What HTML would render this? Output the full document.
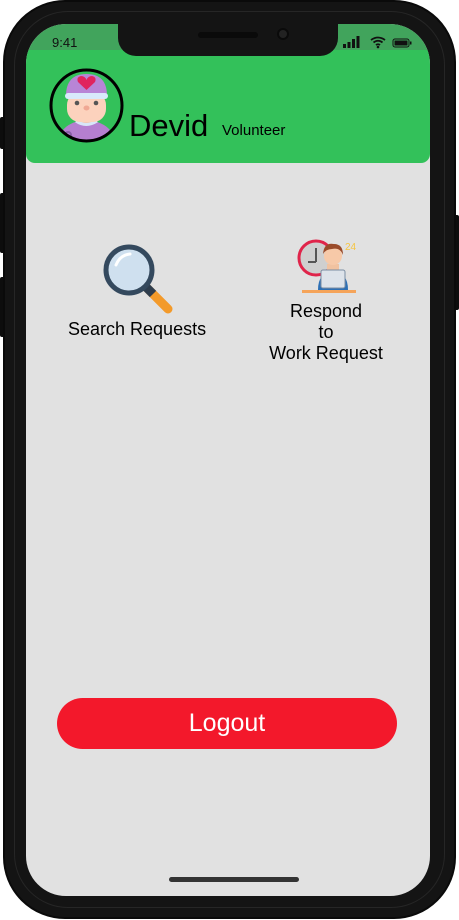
<!DOCTYPE html>
<html><head><meta charset="utf-8"><style>
*{margin:0;padding:0;box-sizing:border-box}
body{width:459px;height:920px;background:#fff;position:relative;overflow:hidden;font-family:"Liberation Sans",sans-serif}
.phone{position:absolute;left:3px;top:0;width:453px;height:919px;background:#141414;border-radius:62px;border:2px solid #0a0a0a}
.inner{position:absolute;left:9px;top:9px;right:9px;bottom:9px;border-radius:54px;border:1px solid #262626}
.btn{position:absolute;background:#0d0d0d;width:5px;border-radius:2px}
.screen{position:absolute;left:26px;top:24px;width:404px;height:872px;background:#e1e1e1;border-radius:40px;overflow:hidden}
.status{position:absolute;left:0;top:0;width:404px;height:30px;background:#41a45c}
.hdr{position:absolute;left:0;top:26px;width:404px;height:113px;background:#33c15a;border-radius:0 0 9px 9px}
.notch{position:absolute;left:92px;top:0;width:220px;height:32px;background:#141414;border-radius:0 0 18px 18px}
.txt{position:absolute;color:#000;white-space:nowrap}
.logout{position:absolute;left:31px;top:674px;width:340px;height:51px;background:#f3182b;border-radius:26px;color:#fff;font-size:25px;text-align:center;line-height:50px}
.home{position:absolute;left:143px;top:853px;width:130px;height:5px;background:#333;border-radius:3px}
</style></head><body>
<div class="btn" style="left:0;top:117px;height:32px"></div>
<div class="btn" style="left:0;top:193px;height:60px"></div>
<div class="btn" style="left:0;top:277px;height:60px"></div>
<div class="btn" style="left:454px;top:215px;height:95px"></div>
<div class="phone"><div class="inner"></div></div>
<div class="screen">
 <div class="status"></div>
 <div class="hdr"></div>
 <div class="notch"><div style="position:absolute;left:80px;top:8px;width:60px;height:6px;background:#0a0a0a;border-radius:3px"></div><div style="position:absolute;left:159px;top:4px;width:12px;height:12px;background:#222;border-radius:50%;border:2px solid #0a0a0a"></div></div>
 <div class="txt" style="left:26px;top:11px;font-size:13px;color:#111">9:41</div>
 <svg style="position:absolute;left:317px;top:12px" width="70" height="14" viewBox="0 0 70 14">
  <rect x="0" y="8" width="3" height="4" fill="#111"/><rect x="4.5" y="6" width="3" height="6" fill="#111"/><rect x="9" y="3" width="3" height="9" fill="#111"/><rect x="13.5" y="0" width="3" height="12" fill="#111"/>
  <path d="M28 4 Q35 -1 42 4 M30.5 6.5 Q35 3 39.5 6.5 M33 9 Q35 7.5 37 9" stroke="#111" stroke-width="1.8" fill="none"/><circle cx="35" cy="11" r="1.3" fill="#111"/>
  <rect x="50" y="3" width="16" height="8" rx="2" fill="none" stroke="#111" stroke-width="1"/><rect x="51.5" y="4.5" width="13" height="5" fill="#111"/><rect x="67" y="5.5" width="1.5" height="3" fill="#111"/>
 </svg>
 <svg style="position:absolute;left:23px;top:44px" width="75" height="75" viewBox="0 0 75 75">
  <defs><clipPath id="c"><circle cx="37.5" cy="37.5" r="35"/></clipPath></defs>
  <g clip-path="url(#c)">
   <rect width="75" height="75" fill="#33c15a"/>
   <path d="M8 75 Q12 54 37 52 Q63 54 67 75Z" fill="#b57fd0"/>
   <rect x="30" y="46" width="15" height="10" fill="#f2c7b0"/>
   <path d="M27 53 Q37 60 48 53" stroke="#d8e6f8" stroke-width="3" fill="none"/>
   <rect x="18" y="24" width="39" height="30" rx="13" fill="#fcd2bd"/>
   <circle cx="28" cy="35" r="2.3" fill="#555"/><circle cx="47" cy="35" r="2.3" fill="#555"/>
   <ellipse cx="37.5" cy="40" rx="3" ry="2.5" fill="#f0a894"/>
   <path d="M17 28 Q17 6 37.5 6 Q58 6 58 28Z" fill="#b885d6"/>
   <rect x="16" y="25" width="43" height="6" rx="3" fill="#d8eafb"/>
   <path d="M37.5 22 L29 14 Q27 9 32 8 Q36 8 37.5 12 Q39 8 43 8 Q48 9 46 14Z" fill="#e0245e"/>
   <circle cx="19" cy="67" r="3" fill="none" stroke="#8a5ea8" stroke-width="2"/>
  </g>
  <circle cx="37.5" cy="37.5" r="35.5" fill="none" stroke="#000" stroke-width="3"/>
 </svg>
 <div class="txt" style="left:103px;top:84px;font-size:31px">Devid</div>
 <div class="txt" style="left:196px;top:98px;font-size:15px">Volunteer</div>
 <svg style="position:absolute;left:76px;top:219px" width="76" height="72" viewBox="0 0 76 72">
  <path d="M44 44 L66 66" stroke="#f39a2a" stroke-width="9" stroke-linecap="round"/>
  <path d="M44 44 L51 51" stroke="#2e3d4d" stroke-width="9"/>
  <circle cx="27" cy="27" r="23" fill="#cfe0ef" stroke="#34495e" stroke-width="5"/>
  <path d="M14 22 Q18 12 28 11" stroke="#fff" stroke-width="3" fill="none" stroke-linecap="round"/>
 </svg>
 <svg style="position:absolute;left:270px;top:212px" width="62" height="58" viewBox="0 0 62 58">
  <circle cx="20" cy="22" r="17" fill="#cfcfcf" stroke="#e0244a" stroke-width="3"/>
  <path d="M20 12 V26 M12 26 H20" stroke="#555" stroke-width="2"/>
  <rect x="6" y="54" width="54" height="3" fill="#f5a45a"/>
  <path d="M22 54 Q22 36 37 36 Q52 36 52 54Z" fill="#2c6fb5"/>
  <rect x="31" y="28" width="12" height="9" fill="#f1c2a0"/>
  <circle cx="37" cy="20" r="9" fill="#f7c9a8"/>
  <path d="M27 18 Q28 6 38 8 Q47 8 47 19 Q44 11 36 13 Q30 13 27 18Z" fill="#9a4b2a"/>
  <rect x="25" y="34" width="24" height="18" rx="2" fill="#dde3ea" stroke="#7c8ea3" stroke-width="1"/>
  <text x="49" y="14" font-size="10" fill="#f5c542" font-family="Liberation Sans">24</text>
 </svg>
 <div class="txt" style="left:42px;top:295px;font-size:18px">Search Requests</div>
 <div class="txt" style="left:0;width:600px;left:0;top:277px;font-size:18px;text-align:center;line-height:21px;width:404px;padding-left:196px">Respond<br>to<br>Work Request</div>
 <div class="logout">Logout</div>
 <div class="home"></div>
</div>
</body></html>
